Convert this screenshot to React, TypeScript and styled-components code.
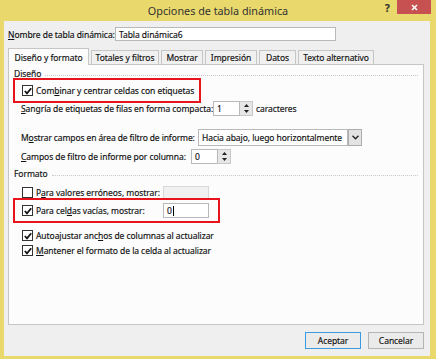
import React from "react";
import styled, { createGlobalStyle } from "styled-components";

const Global = createGlobalStyle`
  html, body { margin: 0; padding: 0; }
  body {
    font-family: "Noto Sans", "Open Sans", sans-serif;
    font-size: 8.5px;
    letter-spacing: -0.06px;
    color: #111;
    -webkit-text-stroke: 0.15px #111;
  }
`;

const Window = styled.div`
  width: 436px;
  height: 359px;
  background-color: #e9d86b;
  display: flex;
  flex-direction: column;
  overflow: hidden;
  position: relative;
`;

const TitleBar = styled.div`
  height: 21px;
  display: flex;
`;

const Title = styled.div`
  flex: 1;
  text-align: center;
  font-size: 10.8px;
  line-height: 22px;
  color: #333;
  -webkit-text-stroke: 0;
  letter-spacing: 0;
`;

const HelpMark = styled.div`
  position: absolute;
  left: 385px;
  top: 1px;
  font-size: 10px;
  font-weight: bold;
  color: #333;
`;

const CloseBtn = styled.div`
  position: absolute;
  left: 397px;
  top: 0;
  width: 34px;
  height: 14px;
  background-color: #c75050;
  display: flex;
  align-items: center;
  justify-content: center;
`;

const Body = styled.div`
  flex: 1;
  margin: 0 6px 3px 4px;
  background-color: #efefef;
  padding: 6px 6px 0 4px;
  display: flex;
  flex-direction: column;
`;

const NameRow = styled.div`
  display: flex;
  align-items: center;
  height: 14px;
`;

const Label = styled.span<{ w?: number; tight?: boolean }>`
  white-space: nowrap;
  ${(p) => (p.w ? `width: ${p.w}px; flex-shrink: 0;` : "")}
  ${(p) => (p.tight ? "letter-spacing: -0.12px;" : "")}
`;

const TextBox = styled.div<{ w: number; disabled?: boolean; h?: number }>`
  width: ${(p) => p.w}px;
  height: ${(p) => p.h ?? 15}px;
  box-sizing: border-box;
  border: 1px solid ${(p) => (p.disabled ? "#d8d8d8" : "#b9b9b9")};
  background-color: ${(p) => (p.disabled ? "#f1f1f1" : "#fff")};
  display: flex;
  align-items: center;
  padding-left: 3px;
  white-space: nowrap;
  flex-shrink: 0;
`;

const Tabs = styled.div`
  display: flex;
  align-items: flex-end;
  margin-top: 7px;
  height: 16px;
  gap: 2px;
`;

const Tab = styled.div<{ active?: boolean; w: number }>`
  width: ${(p) => p.w}px;
  box-sizing: border-box;
  height: ${(p) => (p.active ? 17 : 14)}px;
  border: 1px solid #c6c6c6;
  border-bottom: none;
  background-color: ${(p) => (p.active ? "#fcfcfc" : "#f0f0f0")};
  display: flex;
  align-items: center;
  justify-content: center;
  white-space: nowrap;
  margin-bottom: ${(p) => (p.active ? -1 : 0)}px;
  position: relative;
  z-index: ${(p) => (p.active ? 1 : 0)};
`;

const Panel = styled.div`
  height: 261px;
  box-sizing: border-box;
  border: 1px solid #c6c6c6;
  background-color: #fcfcfc;
  padding: 4px 5px 0 5px;
  display: flex;
  flex-direction: column;
`;

const Section = styled.div<{ mt?: number }>`
  display: flex;
  align-items: center;
  gap: 4px;
  height: 10px;
  line-height: 10px;
  margin-top: ${(p) => p.mt ?? 0}px;
  white-space: nowrap;
  &::after {
    content: "";
    flex: 1;
    border-top: 1px dotted #c8c8c8;
    margin-top: 3px;
  }
`;

const Highlight = styled.div<{ w: number; mt?: number }>`
  width: ${(p) => p.w}px;
  height: 25px;
  box-sizing: border-box;
  border: 2px solid #e8141c;
  display: flex;
  align-items: center;
  padding-left: 7px;
  margin-left: -1px;
  margin-top: ${(p) => p.mt ?? 0}px;
`;

const Row = styled.div<{ mt?: number; indent?: number; h?: number }>`
  display: flex;
  align-items: center;
  height: ${(p) => p.h ?? 15}px;
  margin-top: ${(p) => p.mt ?? 0}px;
  padding-left: ${(p) => p.indent ?? 0}px;
`;

const CheckRow = styled.label<{ w?: number }>`
  display: flex;
  align-items: center;
  gap: 3px;
  white-space: nowrap;
  ${(p) => (p.w ? `width: ${p.w}px; flex-shrink: 0;` : "")}
`;

const Box = styled.span`
  width: 11px;
  height: 11px;
  box-sizing: border-box;
  border: 1px solid #333;
  background-color: #fff;
  display: flex;
  align-items: center;
  justify-content: center;
  flex-shrink: 0;
`;

const SpinWrap = styled.div`
  display: flex;
`;

const Spin = styled.div`
  display: flex;
  width: 13px;
  height: 15px;
  flex-direction: column;
  border: 1px solid #c8c8c8;
  border-left: none;
  box-sizing: border-box;
  background-color: #e6e6e6;
`;

const SpinHalf = styled.div`
  flex: 1;
  display: flex;
  align-items: center;
  justify-content: center;
`;

const DropBtn = styled.div`
  width: 14px;
  height: 17px;
  box-sizing: border-box;
  border: 1px solid #adadad;
  background-color: #e3e3e3;
  display: flex;
  align-items: center;
  justify-content: center;
`;

const Footer = styled.div`
  display: flex;
  justify-content: flex-end;
  gap: 7px;
  margin-top: 7px;
`;

const Button = styled.div<{ primary?: boolean }>`
  width: 56px;
  height: 17px;
  box-sizing: border-box;
  border: 1px solid ${(p) => (p.primary ? "#3c9be0" : "#b4b4b4")};
  background-color: #ebebeb;
  display: flex;
  align-items: center;
  justify-content: center;
`;

const Caret = styled.span`
  display: inline-block;
  width: 1px;
  height: 10px;
  background: #000;
  margin-left: 1px;
`;

function Check({ on }: { on?: boolean }) {
  return (
    <Box>
      {on && (
        <svg width="8" height="8" viewBox="0 0 8 8">
          <path d="M0.8 4 L3 6.4 L7.2 1.2" stroke="#111" strokeWidth="1.7" fill="none" />
        </svg>
      )}
    </Box>
  );
}

function Spinner({ w, value }: { w: number; value: string }) {
  return (
    <SpinWrap>
      <TextBox w={w - 13}>{value}</TextBox>
      <Spin>
        <SpinHalf>
          <svg width="5" height="3" viewBox="0 0 5 3">
            <path d="M0 3 L2.5 0 L5 3 Z" fill="#222" />
          </svg>
        </SpinHalf>
        <SpinHalf>
          <svg width="5" height="3" viewBox="0 0 5 3">
            <path d="M0 0 L2.5 3 L5 0 Z" fill="#222" />
          </svg>
        </SpinHalf>
      </Spin>
    </SpinWrap>
  );
}

export default function App() {
  return (
    <Window>
      <Global />
      <TitleBar>
        <Title>Opciones de tabla dinámica</Title>
      </TitleBar>
      <HelpMark>?</HelpMark>
      <CloseBtn>
        <svg width="7" height="7" viewBox="0 0 7 7">
          <path d="M1 1 L6 6 M6 1 L1 6" stroke="#fff" strokeWidth="1.5" />
        </svg>
      </CloseBtn>
      <Body>
        <NameRow>
          <Label w={107}>
            <u>N</u>ombre de tabla dinámica:
          </Label>
          <TextBox w={221} h={14}>Tabla dinámica6</TextBox>
        </NameRow>
        <Tabs>
          <Tab active w={81}>Diseño y formato</Tab>
          <Tab w={68}>Totales y filtros</Tab>
          <Tab w={42}>Mostrar</Tab>
          <Tab w={52}>Impresión</Tab>
          <Tab w={37}>Datos</Tab>
          <Tab w={76}>Texto alternativo</Tab>
        </Tabs>
        <Panel>
          <Section>Diseño</Section>
          <Highlight w={188} mt={-1}>
            <CheckRow>
              <Check on />
              <span>
                Com<u>b</u>inar y centrar celdas con etiquetas
              </span>
            </CheckRow>
          </Highlight>
          <Row mt={-2} indent={7}>
            <Label w={192}>
              <u>S</u>angría de etiquetas de filas en forma compacta:
            </Label>
            <Spinner w={40} value="1" />
            <Label style={{ marginLeft: 3 }}>caracteres</Label>
          </Row>
          <Row mt={13} indent={7} h={17}>
            <Label w={177} tight>
              M<u>o</u>strar campos en área de filtro de informe:
            </Label>
            <TextBox w={150} h={17}>Hacia abajo, luego horizontalmente</TextBox>
            <DropBtn>
              <svg width="7" height="5" viewBox="0 0 7 5">
                <path d="M0.5 0.8 L3.5 3.8 L6.5 0.8" stroke="#222" strokeWidth="1.3" fill="none" />
              </svg>
            </DropBtn>
          </Row>
          <Row mt={3} indent={7}>
            <Label w={170}>
              <u>C</u>ampos de filtro de informe por columna:
            </Label>
            <Spinner w={40} value="0" />
          </Row>
          <Section mt={5}>Formato</Section>
          <Row mt={6} indent={8}>
            <CheckRow w={141}>
              <Check />
              <span>
                P<u>a</u>ra valores erróneos, mostrar:
              </span>
            </CheckRow>
            <TextBox w={46} h={14} disabled />
          </Row>
          <Highlight w={207} mt={-2}>
            <CheckRow w={141}>
              <Check on />
              <span>
                Para cel<u>d</u>as vacías, mostrar:
              </span>
            </CheckRow>
            <TextBox w={46}>
              0<Caret />
            </TextBox>
          </Highlight>
          <Row mt={5} indent={8}>
            <CheckRow>
              <Check on />
              <span>
                Autoajustar anc<u>h</u>os de columnas al actualizar
              </span>
            </CheckRow>
          </Row>
          <Row mt={0} indent={8}>
            <CheckRow>
              <Check on />
              <span>
                <u>M</u>antener el formato de la celda al actualizar
              </span>
            </CheckRow>
          </Row>
        </Panel>
        <Footer>
          <Button primary>Aceptar</Button>
          <Button>Cancelar</Button>
        </Footer>
      </Body>
    </Window>
  );
}
